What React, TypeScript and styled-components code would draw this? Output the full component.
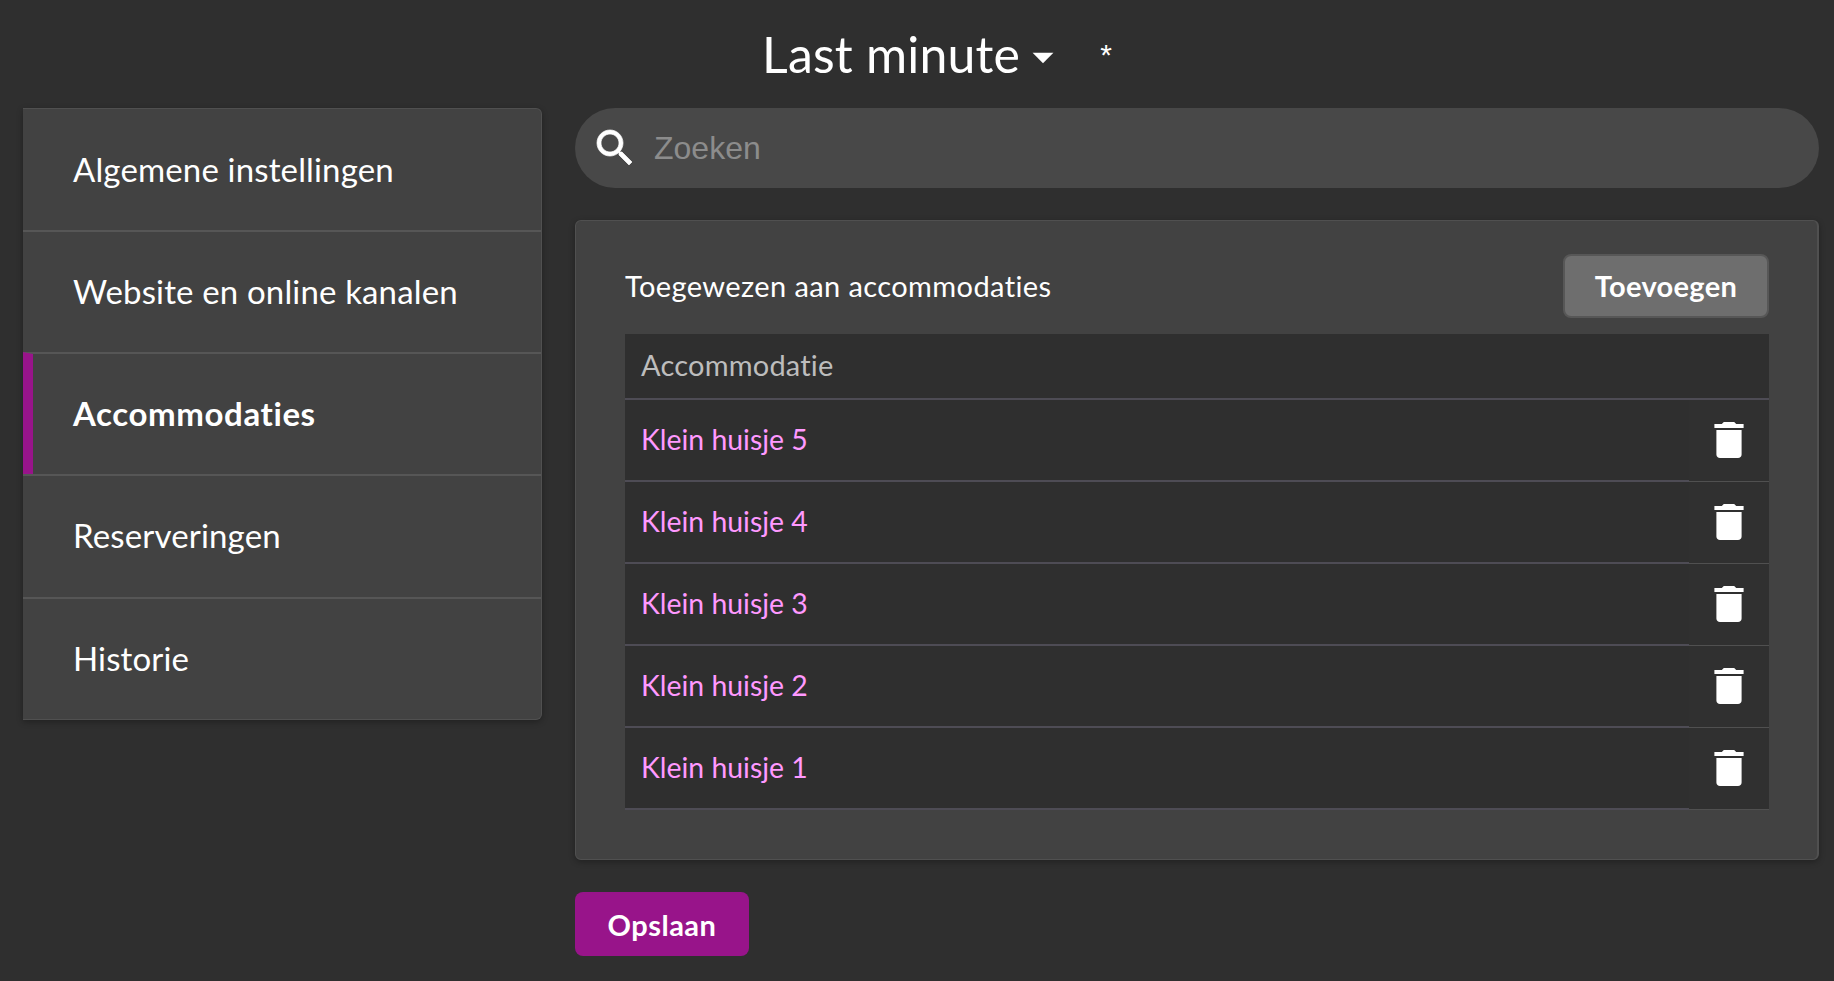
import React from "react";
import styled, { createGlobalStyle } from "styled-components";

const Global = createGlobalStyle`
  html, body { margin: 0; padding: 0; background: #2f2f2f; }
  body { font-family: "Lato", "Noto Sans", sans-serif; color: #fff; overflow: hidden; font-variant-ligatures: none; }
  * { box-sizing: border-box; }
`;

const Page = styled.div`
  width: 1834px;
  height: 981px;
  background: #2f2f2f;
  padding: 0 15px 0 23px;
  display: flex;
  flex-direction: column;
`;

const Header = styled.header`
  height: 108px;
  display: flex;
  align-items: flex-start;
  padding: 23px 0 0 739px;
`;

const Title = styled.h1`
  margin: 0;
  font-size: 50px;
  line-height: 62px;
  font-weight: 400;
  letter-spacing: 0.2px;
`;

const Caret = styled.svg`
  width: 50px;
  height: 50px;
  margin: 9px 0 0 -2px;
  fill: #fff;
`;

const Star = styled.span`
  font-family: "Liberation Sans", sans-serif;
  margin: 16px 0 0 32px;
  font-size: 30px;
  line-height: 32px;
`;

const Columns = styled.div`
  display: flex;
  align-items: flex-start;
  gap: 33px;
`;

const Sidebar = styled.nav`
  width: 519px;
  flex: none;
  background: #424242;
  border: 1px solid #505050;
  border-left: none;
  border-radius: 0 6px 6px 0;
  box-shadow: 0 2px 6px rgba(0, 0, 0, 0.3);
`;

const NavItem = styled.a<{ $active?: boolean }>`
  display: flex;
  align-items: center;
  height: 122.2px;
  padding-left: ${(p) => (p.$active ? "40px" : "50px")};
  padding-bottom: 2px;
  border-left: ${(p) => (p.$active ? "10px solid #98148a" : "0 solid transparent")};
  border-top: 2px solid #565656;
  font-size: 33px;
  font-weight: ${(p) => (p.$active ? 700 : 400)};
  letter-spacing: ${(p) => (p.$active ? "0.6px" : "0.15px")};
  color: #fff;
  &:first-child { border-top: none; height: 121px; }
`;

const Main = styled.main`
  width: 1244px;
  flex: none;
  display: flex;
  flex-direction: column;
`;

const Search = styled.div`
  height: 80px;
  border-radius: 40px;
  background: #484848;
  display: flex;
  align-items: center;
  padding-left: 16px;
  gap: 15px;
`;

const SearchIcon = styled.svg`
  width: 48px;
  height: 48px;
  fill: #fff;
  stroke: #fff;
  stroke-width: 0.35;
  flex: none;
`;

const Placeholder = styled.span`
  font-family: "Liberation Sans", sans-serif;
  font-size: 32px;
  color: #8c8c8c;
`;

const Card = styled.section`
  margin-top: 32px;
  height: 640px;
  padding: 33px 48px 0 49px;
  background: #424242;
  border: 1px solid #505050;
  border-right-width: 2px;
  border-radius: 6px;
  box-shadow: 0 2px 6px rgba(0, 0, 0, 0.3);
`;

const CardHead = styled.div`
  display: flex;
  justify-content: space-between;
  align-items: center;
  height: 64px;
  margin-bottom: 16px;
`;

const CardTitle = styled.span`
  font-size: 29px;
  letter-spacing: 0.4px;
  padding-bottom: 2px;
`;

const AddButton = styled.button`
  width: 206px;
  height: 64px;
  padding-bottom: 3px;
  background: #6e6e6e;
  border: 2px solid #575757;
  border-radius: 8px;
  color: #fff;
  font: 700 29px "Lato", sans-serif;
  letter-spacing: 0.3px;
`;

const Table = styled.div`
  background: #2f2f2f;
`;

const HeadRow = styled.div`
  height: 66px;
  display: flex;
  align-items: center;
  padding: 0 0 4px 16px;
  font-size: 29px;
  letter-spacing: 0.2px;
  color: #bdbdbd;
  border-bottom: 2px solid #4e4c55;
`;

const Row = styled.div`
  height: 82px;
  display: flex;
`;

const NameCell = styled.div`
  flex: 1;
  display: flex;
  align-items: center;
  padding: 0 0 2px 16px;
  font-size: 28.4px;
  color: #ff99ff;
  border-bottom: 2px solid #4e4c55;
`;

const ActionCell = styled.div`
  width: 80px;
  display: flex;
  align-items: center;
  justify-content: center;
  padding-bottom: 2px;
  border-bottom: 1px solid #505050;
  background: #303030;
`;

const TrashIcon = styled.svg`
  width: 48px;
  height: 48px;
  fill: #fff;
`;

const SaveButton = styled.button`
  margin-top: 32px;
  width: 174px;
  height: 64px;
  background: #98148a;
  border: none;
  border-radius: 8px;
  color: #fff;
  font: 700 29px "Lato", sans-serif;
  letter-spacing: 0.5px;
`;

const navItems = ["Algemene instellingen", "Website en online kanalen", "Accommodaties", "Reserveringen", "Historie"];
const rows = ["Klein huisje 5", "Klein huisje 4", "Klein huisje 3", "Klein huisje 2", "Klein huisje 1"];

export default function App() {
  return (
    <Page>
      <Global />
      <Header>
        <Title>Last minute</Title>
        <Caret viewBox="0 0 24 24"><path d="M7 10l5 5 5-5z" /></Caret>
        <Star>*</Star>
      </Header>
      <Columns>
        <Sidebar>
          {navItems.map((n) => (
            <NavItem key={n} $active={n === "Accommodaties"}>{n}</NavItem>
          ))}
        </Sidebar>
        <Main>
          <Search>
            <SearchIcon viewBox="0 0 24 24">
              <path d="M15.5 14h-.79l-.28-.27C15.41 12.59 16 11.11 16 9.5 16 5.91 13.09 3 9.5 3S3 5.91 3 9.5 5.91 16 9.5 16c1.61 0 3.09-.59 4.23-1.57l.27.28v.79l5 4.99L20.49 19l-4.99-5zm-6 0C7.01 14 5 11.99 5 9.5S7.01 5 9.5 5 14 7.01 14 9.5 11.99 14 9.5 14z" />
            </SearchIcon>
            <Placeholder>Zoeken</Placeholder>
          </Search>
          <Card>
            <CardHead>
              <CardTitle>Toegewezen aan accommodaties</CardTitle>
              <AddButton>Toevoegen</AddButton>
            </CardHead>
            <Table>
              <HeadRow>Accommodatie</HeadRow>
              {rows.map((r) => (
                <Row key={r}>
                  <NameCell>{r}</NameCell>
                  <ActionCell>
                    <TrashIcon viewBox="0 0 24 24">
                      <path d="M5.7 19.2c0 1 .8 1.8 1.8 1.8h9c1 0 1.8-.8 1.8-1.8V7H5.7v12.2zM19.3 4H15.6l-1-1H9.4l-1 1H4.7v2h14.6V4z" />
                    </TrashIcon>
                  </ActionCell>
                </Row>
              ))}
            </Table>
          </Card>
          <SaveButton>Opslaan</SaveButton>
        </Main>
      </Columns>
    </Page>
  );
}
